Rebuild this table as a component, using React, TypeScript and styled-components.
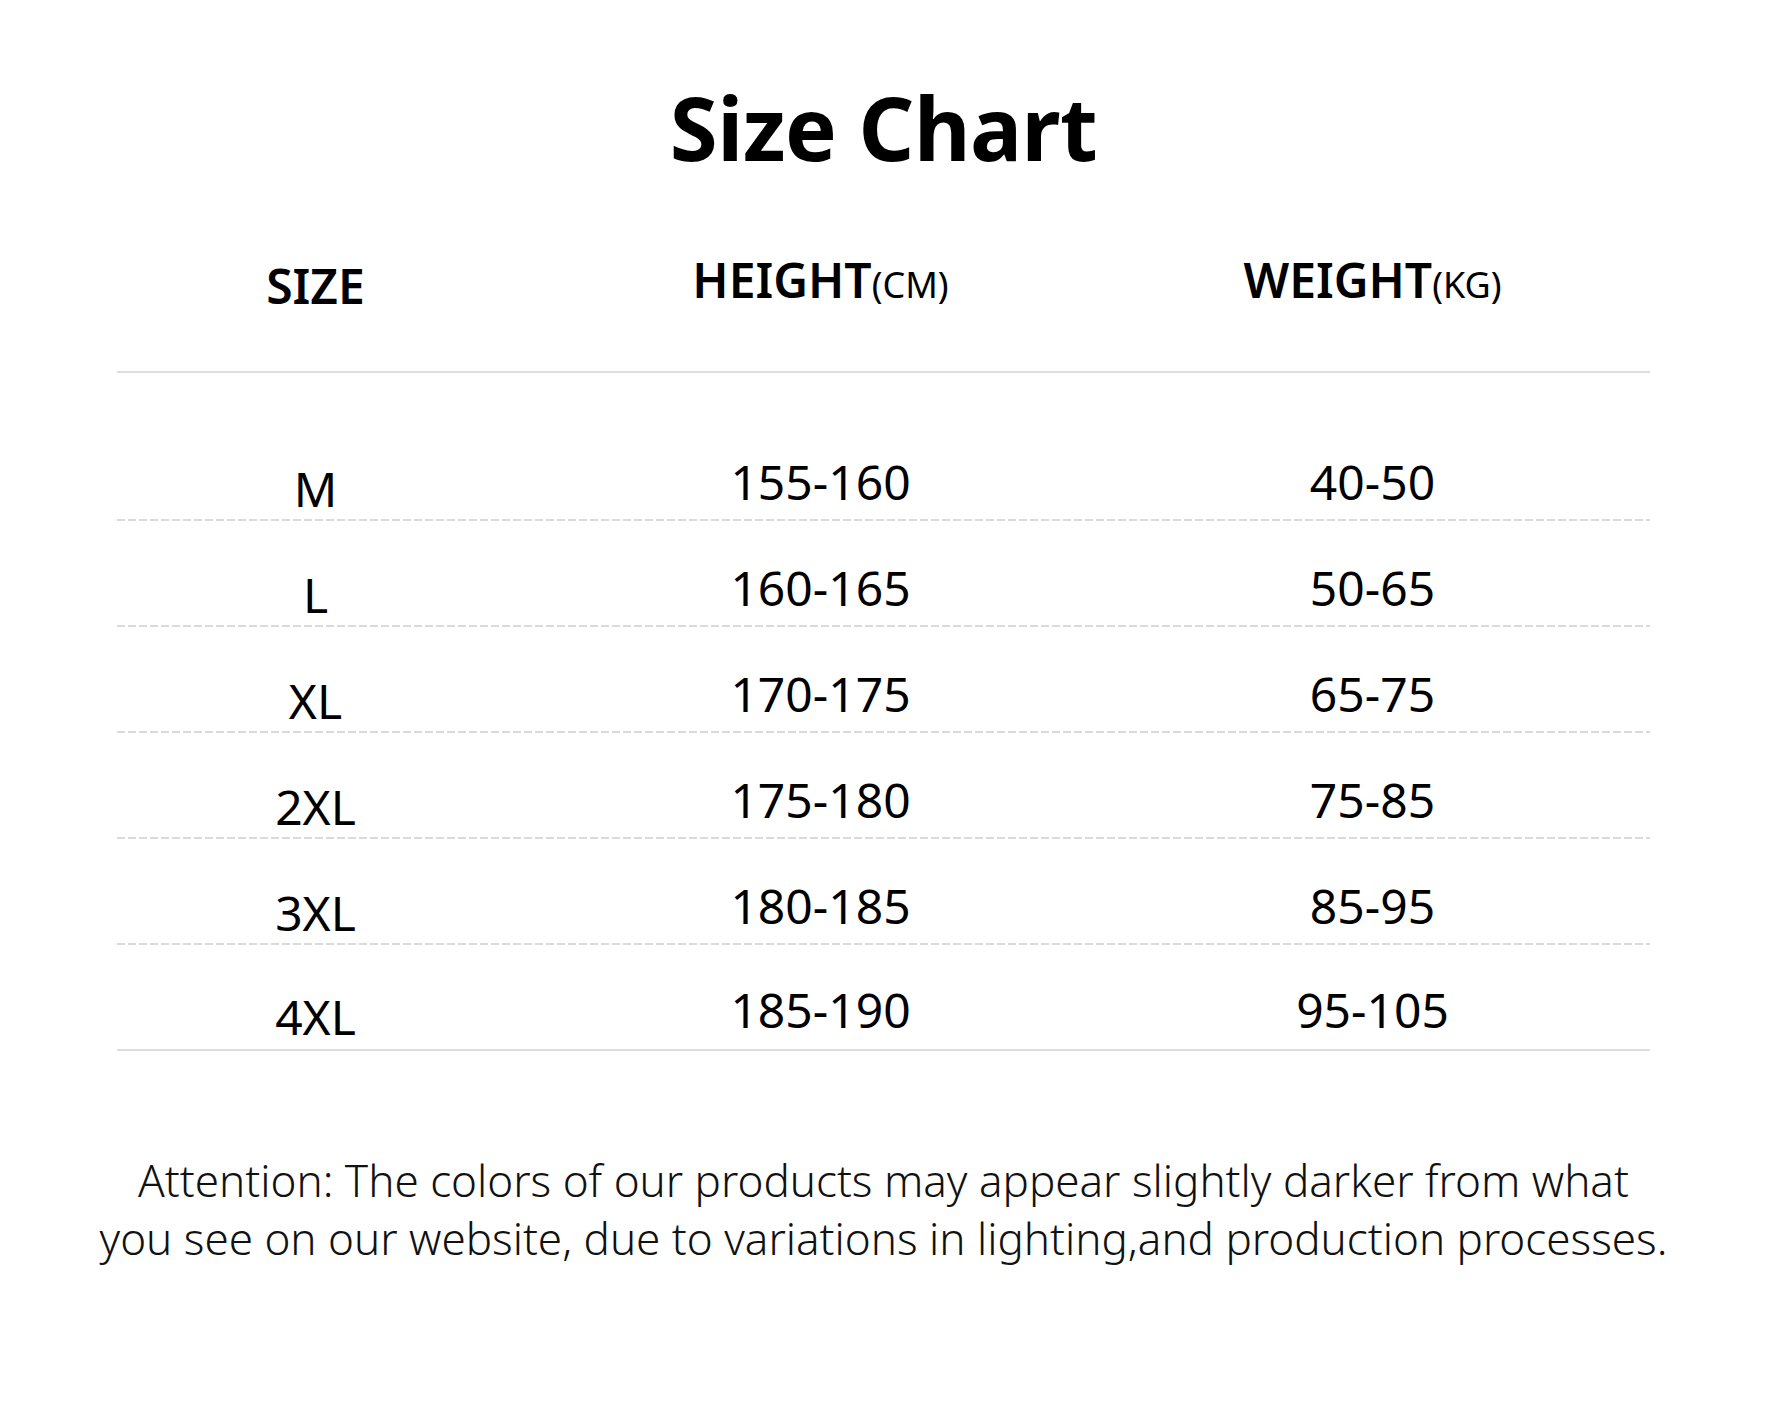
import React from 'react'
import styled, { createGlobalStyle } from 'styled-components'

const GlobalStyle = createGlobalStyle`
  html, body {
    margin: 0;
    padding: 0;
    background: #ffffff;
  }
  body {
    font-family: 'Noto Sans', 'Open Sans', 'DejaVu Sans', sans-serif;
    color: #000;
  }
`

const Page = styled.div`
  width: 1767px;
  height: 1412px;
  display: flex;
  flex-direction: column;
  align-items: center;
  box-sizing: border-box;
  padding-top: 72px;
`

const Title = styled.h1`
  margin: 0;
  font-size: 87px;
  font-weight: 700;
  line-height: 110px;
  letter-spacing: -0.5px;
`

const Table = styled.div`
  width: 1533px;
  margin-top: 56px;
  margin-left: -1px;
`

const Row = styled.div<{ $variant: 'head' | 'body' | 'last' }>`
  display: grid;
  grid-template-columns: 398px 612px 492px 1fr;
  align-items: end;
  box-sizing: border-box;
  height: ${(p) => (p.$variant === 'head' ? 135 : 106)}px;
  padding-bottom: ${(p) => (p.$variant === 'head' ? 67 : 0)}px;
  border-bottom: ${(p) => (p.$variant === 'body' ? 'none' : '2px solid #dddddd')};
  background: ${(p) =>
    p.$variant === 'body'
      ? 'linear-gradient(to right, #dadada 0 8px, transparent 8px 11px) left bottom / 11px 2px repeat-x'
      : 'none'};
`

const FirstGap = styled.div`
  height: 42px;
`

const HeadCell = styled.div<{ $low?: boolean }>`
  text-align: center;
  font-size: 48px;
  font-weight: 600;
  line-height: 1;
  transform: translateY(${(p) => (p.$low ? 6 : 0)}px);
`

const Unit = styled.span`
  font-size: 36px;
  font-weight: 400;
`

const Cell = styled.div<{ $lift: number }>`
  text-align: center;
  font-size: 48px;
  font-weight: 400;
  line-height: 1;
  padding-bottom: ${(p) => p.$lift}px;
`

const Note = styled.p`
  margin: 100px 0 0;
  text-align: center;
  font-size: 44px;
  font-weight: 300;
  line-height: 58px;
  color: #111;
`

const rows = [
  ['M', '155-160', '40-50'],
  ['L', '160-165', '50-65'],
  ['XL', '170-175', '65-75'],
  ['2XL', '175-180', '75-85'],
  ['3XL', '180-185', '85-95'],
  ['4XL', '185-190', '95-105'],
]

export default function App() {
  return (
    <>
      <GlobalStyle />
      <Page>
        <Title>Size Chart</Title>
        <Table>
          <Row $variant="head">
            <HeadCell $low>SIZE</HeadCell>
            <HeadCell>
              HEIGHT<Unit>(CM)</Unit>
            </HeadCell>
            <HeadCell>
              WEIGHT<Unit>(KG)</Unit>
            </HeadCell>
          </Row>
          <FirstGap />
          {rows.map((r, i) => (
            <Row key={r[0]} $variant={i === rows.length - 1 ? 'last' : 'body'}>
              <Cell $lift={8}>{r[0]}</Cell>
              <Cell $lift={15}>{r[1]}</Cell>
              <Cell $lift={15}>{r[2]}</Cell>
            </Row>
          ))}
        </Table>
        <Note>
          Attention: The colors of our products may appear slightly darker from what
          <br />
          you see on our website, due to variations in lighting,and production processes.
        </Note>
      </Page>
    </>
  )
}
